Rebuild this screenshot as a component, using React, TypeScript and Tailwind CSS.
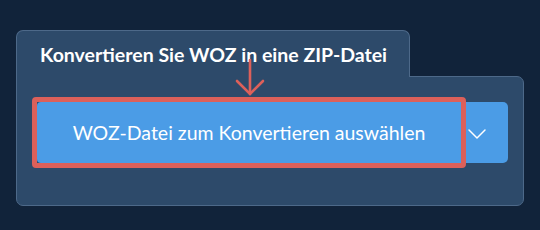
import { ChevronDown } from "lucide-react";

export default function App() {
  return (
    <div
      className="h-[230px] w-[540px] bg-[#11233a] pl-4 pt-[30px]"
      style={{ fontFamily: "Lato, 'Noto Sans', sans-serif" }}
    >
      <div className="w-[508px]">
        {/* tab */}
        <div className="relative z-10 -mb-px h-[47px] w-[394px] rounded-t-[7px] border border-b-0 border-[#4d6989] bg-[#2d4a6a] pl-[23px] pt-3">
          <span className="text-[19.5px] font-bold leading-6 text-white">
            Konvertieren Sie WOZ in eine ZIP-Datei
          </span>
        </div>

        {/* panel body */}
        <div className="relative h-[130px] rounded-tr-[7px] rounded-b-[7px] border border-[#4d6989] bg-[#2d4a6a] pl-5 pt-[25px]">
          <div className="flex h-[61px] w-[471px]">
            <button className="flex w-[424px] items-center justify-center rounded-l-[4px] bg-[#4b9ce6] pt-px text-[19.5px] text-white">
              WOZ-Datei zum Konvertieren auswählen
            </button>
            <button className="flex flex-1 items-center justify-start rounded-r-[5px] bg-[#4b9ce6] pt-[3px] text-white">
              <ChevronDown size={32} strokeWidth={1.1} />
            </button>
          </div>

          {/* annotation: red outline + arrow */}
          <div className="pointer-events-none absolute left-[15px] top-[20px] h-[71px] w-[434px] rounded-[4px] border-[5px] border-[#dc605a]" />
          <svg
            className="pointer-events-none absolute left-[218px] top-[-18px] z-20"
            width="30"
            height="38"
            viewBox="0 0 30 38"
            fill="none"
            stroke="#dc605a"
            strokeWidth="2.6"
            strokeLinecap="round"
          >
            <path d="M15 1 V35" />
            <path d="M2 22 L15 35 L28 22" />
          </svg>
        </div>
      </div>
    </div>
  );
}
